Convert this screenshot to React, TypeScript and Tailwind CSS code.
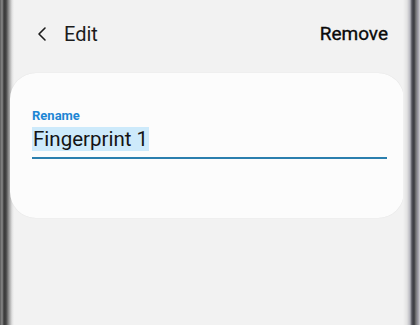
import { ChevronLeft } from "lucide-react";

export default function App() {
  return (
    <div className="w-[420px] h-[325px] flex flex-row bg-[#f2f2f2] overflow-hidden [font-family:Roboto,'Noto_Sans',sans-serif]">
      <div className="w-[14px] h-full bg-[linear-gradient(to_right,#5a5a5a_0px,#8a8a8a_2px,#3a3a3a_4px,#444_6px,#9a9a9a_9px,#e0e0e0_12px,#f2f2f2_14px)]" />
      <div className="flex-1 flex flex-col">
        <div className="h-[68px] flex flex-row items-center justify-between pl-[16px] pr-[15px] pt-[0px]">
          <div className="flex flex-row items-center gap-[10px]">
            <ChevronLeft className="w-[24px] h-[24px] text-[#1c1c1c]" strokeWidth={1.6} />
            <span className="text-[20px] text-[#1c1c1c]">Edit</span>
          </div>
          <span className="text-[19px] font-normal text-[#0a0a0a] [-webkit-text-stroke:0.35px_#0a0a0a]">Remove</span>
        </div>
        <div className="mt-[5px] mx-[-4px] mr-[-1px] h-[145px] bg-[#fcfcfc] rounded-[26px] shadow-[0_0_1px_rgba(0,0,0,0.12)] pl-[22px] pr-[17px] pt-[35px]">
          <div className="text-[13px] font-bold text-[#1d86d4] leading-[15px]">Rename</div>
          <div className="mt-[2px] pb-[4px] border-b-2 border-[#2b7fae]">
            <span className="text-[20.5px] leading-[28px] text-[#141414] bg-[#cdeafb] px-[1px]">Fingerprint 1</span>
          </div>
        </div>
      </div>
      <div className="w-[17px] h-full bg-[linear-gradient(to_right,#f2f2f2_0px,#e2e2e2_4px,#b8b8c0_7px,#505058_9px,#3a3a40_11px,#777_13px,#9a98a4_15px,#cfcfcf_17px)]" />
    </div>
  );
}
